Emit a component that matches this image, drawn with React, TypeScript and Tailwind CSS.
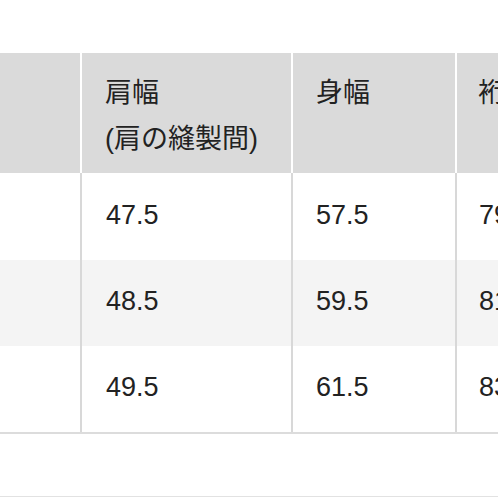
export default function App() {
  const font = { fontFamily: '"Liberation Sans", "Noto Sans CJK JP", sans-serif' };
  const rows = [
    { bg: "bg-white", v: ["", "47.5", "57.5", "79.5"] },
    { bg: "bg-[#f4f4f4]", v: ["", "48.5", "59.5", "81.5"] },
    { bg: "bg-white", v: ["", "49.5", "61.5", "83.5"] },
  ];
  return (
    <div className="w-[498px] h-[498px] overflow-hidden bg-white text-[#222] text-[27px]" style={font}>
      <div className="h-[53px]" />
      <div className="w-[600px]">
        <div className="grid grid-cols-[80px_209px_162px_1fr] gap-x-[2px] bg-white h-[120px]">
          <div className="bg-[#dadada]" />
          <div className="bg-[#dadada] pl-[23px] pt-[17px] leading-[46px]">
            <div>肩幅</div>
            <div>(肩の縫製間)</div>
          </div>
          <div className="bg-[#dadada] pl-[23px] pt-[17px] leading-[46px]">身幅</div>
          <div className="bg-[#dadada] pl-[21px] pt-[17px] leading-[46px]">裄丈</div>
        </div>
        {rows.map((r, i) => (
          <div
            key={i}
            className={`grid grid-cols-[80px_209px_162px_1fr] gap-x-[2px] bg-[#d8d8d8] ${i === 0 ? "h-[87px]" : "h-[86px]"}`}
          >
            {r.v.map((t, j) => (
              <div
                key={j}
                className={`${r.bg} flex items-center leading-[36px] pb-[4px] ${j === 1 ? "pl-[24px]" : j === 2 ? "pl-[23px]" : "pl-[22px]"}`}
              >
                {t}
              </div>
            ))}
          </div>
        ))}
        <div className="h-[2px] bg-[#dcdcdc]" />
        <div className="h-[62px]" />
        <div className="h-[1px] bg-[#e2e2e2]" />
      </div>
    </div>
  );
}
